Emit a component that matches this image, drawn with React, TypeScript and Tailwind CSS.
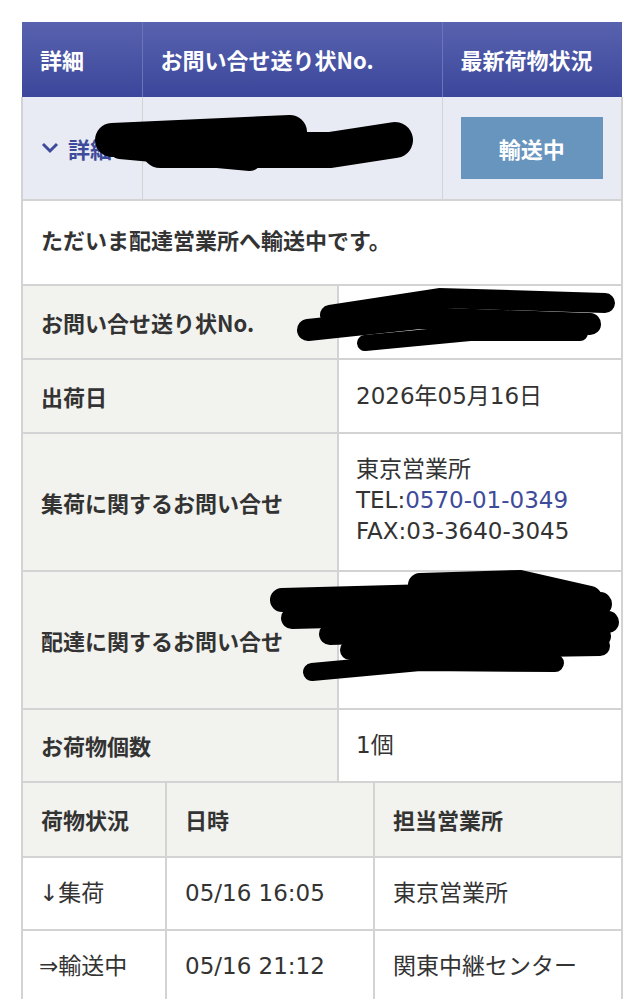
import React from "react";

const info = [
  { label: "お問い合せ送り状No.", h: "h-[73px]", value: null },
  { label: "出荷日", h: "h-[74px]", value: ["2026年05月16日"] },
  { label: "集荷に関するお問い合せ", h: "h-[138px]", value: "contact" },
  { label: "配達に関するお問い合せ", h: "h-[138px]", value: null },
  { label: "お荷物個数", h: "h-[73px]", value: ["1個"] },
];

const history = [
  { status: "↓集荷", date: "05/16 16:05", office: "東京営業所" },
  { status: "⇒輸送中", date: "05/16 21:12", office: "関東中継センター" },
];

const valueFont = {
  fontFamily: '"DejaVu Sans", "Noto Sans CJK JP", sans-serif',
};

const Redactions = () => (
  <svg
    className="absolute left-0 top-0 pointer-events-none"
    width={642}
    height={999}
    viewBox="0 0 642 999"
  >
    <g stroke="#000" strokeLinecap="round" fill="none">
      {/* row under header */}
      <path d="M112 140 L 290 132" strokeWidth={34} />
      <path d="M160 150 L 330 150 L 395 140" strokeWidth={36} />
      <path d="M120 148 L 250 160" strokeWidth={22} />
      {/* tracking number */}
      <path d="M330 315 L 440 298 L 605 303" strokeWidth={20} />
      <path d="M308 330 L 420 318 L 590 324" strokeWidth={22} />
      <path d="M365 343 L 470 333 L 580 333" strokeWidth={16} />
      {/* delivery contact */}
      <path d="M420 585 L 520 582 L 590 598" strokeWidth={24} />
      <path d="M282 600 L 430 596 L 600 604" strokeWidth={24} />
      <path d="M292 618 L 450 614 L 608 622" strokeWidth={22} />
      <path d="M330 634 L 460 630 L 600 636" strokeWidth={22} />
      <path d="M350 650 L 480 648 L 600 646" strokeWidth={20} />
      <path d="M312 672 L 420 662 L 555 663" strokeWidth={18} />
    </g>
  </svg>
);

const App = () => {
  return (
    <div
      className="relative w-[642px] h-[999px] overflow-hidden bg-white text-[#333] text-[22px]"
      style={{ fontFamily: '"Noto Sans CJK JP", "Noto Sans", sans-serif' }}
    >
      <div className="pt-[22px] pl-[21px] w-[621px]">
        {/* summary table */}
        <table className="w-[600px] border-collapse table-fixed">
          <colgroup>
            <col className="w-[120px]" />
            <col className="w-[300px]" />
            <col className="w-[180px]" />
          </colgroup>
          <thead>
            <tr className="h-[75px] bg-gradient-to-b from-[#5862ae] to-[#3c479c] text-white font-bold">
              <td className="pl-[18px] border-r border-[#6b74b8]">詳細</td>
              <td className="pl-[18px] border-r border-[#6b74b8]">お問い合せ送り状No.</td>
              <td className="pl-[18px]">最新荷物状況</td>
            </tr>
          </thead>
          <tbody>
            <tr className="h-[103px] bg-[#e8ebf4]">
              <td className="pl-[17px] border-2 border-t-0 border-r border-[#d3d3d3]">
                <div className="flex items-center gap-[8px] text-[#3e4b9a] font-bold">
                  <svg width="20" height="14" viewBox="0 0 20 14">
                    <path
                      d="M3 3 L10 10 L17 3"
                      stroke="#3e4b9a"
                      strokeWidth="3"
                      fill="none"
                    />
                  </svg>
                  <span>詳細</span>
                </div>
              </td>
              <td className="border-2 border-t-0 border-x border-[#d3d3d3]"></td>
              <td className="border-2 border-t-0 border-l border-[#d3d3d3]">
                <div className="flex justify-center">
                  <div className="w-[142px] h-[62px] bg-[#6795bd] text-white font-bold flex items-center justify-center">
                    輸送中
                  </div>
                </div>
              </td>
            </tr>
            <tr className="h-[85px]">
              <td
                colSpan={3}
                className="pl-[18px] pb-[6px] font-bold border-2 border-[#d3d3d3]"
              >
                ただいま配達営業所へ輸送中です。
              </td>
            </tr>
          </tbody>
        </table>

        {/* detail table */}
        <table className="w-[600px] border-collapse table-fixed">
          <colgroup>
            <col className="w-[316px]" />
            <col className="w-[284px]" />
          </colgroup>
          <tbody>
            {info.map((row) => (
              <tr key={row.label} className={row.h}>
                <td className="pl-[18px] bg-[#f2f2ee] font-bold border-2 border-t-0 border-[#d3d3d3]">
                  {row.label}
                </td>
                <td
                  className="pl-[17px] border-2 border-t-0 border-[#d3d3d3] leading-[31px] text-[23px]"
                  style={valueFont}
                >
                  {row.value === "contact" ? (
                    <div className="pb-[3px]">
                      <div>東京営業所</div>
                      <div>
                        TEL:<span className="text-[#3e4b9a]">0570-01-0349</span>
                      </div>
                      <div>FAX:03-3640-3045</div>
                    </div>
                  ) : Array.isArray(row.value) ? (
                    row.value.map((v) => <div key={v}>{v}</div>)
                  ) : null}
                </td>
              </tr>
            ))}
          </tbody>
        </table>

        {/* history table */}
        <table className="w-[600px] border-collapse table-fixed">
          <colgroup>
            <col className="w-[144px]" />
            <col className="w-[208px]" />
            <col className="w-[248px]" />
          </colgroup>
          <thead>
            <tr className="h-[74px] bg-[#f2f2ee] font-bold">
              <td className="pl-[18px] border-2 border-t-0 border-[#d3d3d3]">荷物状況</td>
              <td className="pl-[18px] border-2 border-t-0 border-[#d3d3d3]">日時</td>
              <td className="pl-[18px] border-2 border-t-0 border-[#d3d3d3]">担当営業所</td>
            </tr>
          </thead>
          <tbody className="text-[23px]" style={valueFont}>
            {history.map((h) => (
              <tr key={h.date} className="h-[73px]">
                <td className="pl-[16px] border-2 border-t-0 border-[#d3d3d3]">{h.status}</td>
                <td className="pl-[18px] border-2 border-t-0 border-[#d3d3d3]">{h.date}</td>
                <td className="pl-[18px] border-2 border-t-0 border-[#d3d3d3]">{h.office}</td>
              </tr>
            ))}
          </tbody>
        </table>
      </div>
      <Redactions />
    </div>
  );
};

export default App;
